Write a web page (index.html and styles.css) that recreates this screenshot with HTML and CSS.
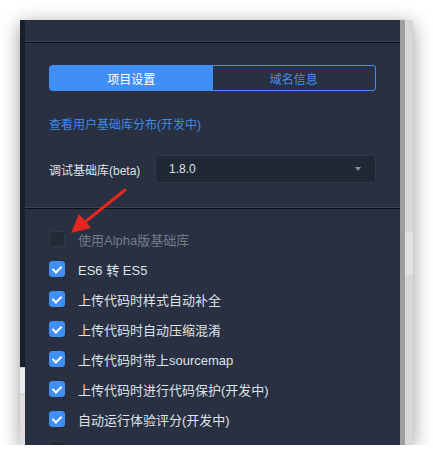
FILE: index.html
```html
<!DOCTYPE html>
<html lang="zh-CN">
<head>
  <meta charset="UTF-8">
  <meta name="viewport" content="width=device-width, initial-scale=1.0">
  <title>项目设置</title>
  <link rel="stylesheet" href="styles.css">
</head>
<body>
  <div class="window">
    <div class="side">
      <div class="side-dark"></div>
      <div class="side-light"></div>
    </div>

    <div class="panel">
      <div class="topbar"></div>

      <div class="settings">
        <div class="tabs">
          <div class="tab active">项目设置</div>
          <div class="tab">域名信息</div>
        </div>

        <a class="link" href="#">查看用户基础库分布(开发中)</a>

        <div class="field">
          <label class="field-label">调试基础库(beta)</label>
          <div class="select">
            <span>1.8.0</span>
            <span class="caret"></span>
          </div>
        </div>
      </div>

      <ul class="options">
        <li class="option disabled"><span class="box"></span>使用Alpha版基础库</li>
        <li class="option"><span class="box checked"></span>ES6 转 ES5</li>
        <li class="option"><span class="box checked"></span>上传代码时样式自动补全</li>
        <li class="option"><span class="box checked"></span>上传代码时自动压缩混淆</li>
        <li class="option"><span class="box checked"></span>上传代码时带上sourcemap</li>
        <li class="option"><span class="box checked"></span>上传代码时进行代码保护(开发中)</li>
        <li class="option"><span class="box checked"></span>自动运行体验评分(开发中)</li>
        <li class="option"><span class="box"></span></li>
      </ul>

      <!-- annotation arrow pointing at the alpha checkbox -->
      <svg class="arrow" width="70" height="60" viewBox="0 0 70 60">
        <line x1="66" y1="4" x2="26" y2="36" stroke="#e5281f" stroke-width="3" stroke-linecap="round"/>
        <polygon points="12,47 20,28 32,42" fill="#e5281f"/>
      </svg>
    </div>

    <div class="scroll">
      <div class="scroll-edge"></div>
      <div class="scroll-track"><span class="thumb"></span></div>
    </div>
  </div>
</body>
</html>
```

FILE: styles.css
```css
:root {
  --panel: #283041;
  --blue: #3f8ff7;
  --link: #3d8be6;
  --text: #dfe2e8;
  --muted: #747a86;
}
* { box-sizing: border-box; margin: 0; padding: 0; }
body {
  background: #ffffff;
  font-family: "Liberation Sans", "Noto Sans CJK SC", sans-serif;
  padding: 20px 20px 0 20px;
}
.window {
  display: flex;
  width: 393px;
  height: 425px;
  overflow: hidden;
  box-shadow: 0 4px 18px rgba(0,0,0,0.4);
}
.side {
  width: 5px;
  display: flex;
  flex-direction: column;
}
.side-dark { height: 347px; background: #1a1f2b; }
.side-light {
  flex: 1;
  background: #e3dddd;
  border-top: 1px solid #c9c9c9;
  box-shadow: inset 0 26px 0 #ececec, inset 0 27px 0 #c4c4c4;
}
.panel {
  position: relative;
  width: 375px;
  background: var(--panel);
}
.topbar {
  height: 22px;
  border-bottom: 1px solid #3b4453;
  box-shadow: 0 1px 0 #0b0e13;
}
.settings {
  height: 166px;
  padding: 23px 24px 0;
  border-bottom: 1px solid #3b4453;
  box-shadow: 0 1px 0 #0b0e13;
}
.tabs {
  display: flex;
  height: 26px;
  border: 1px solid var(--blue);
  border-radius: 3px;
  overflow: hidden;
}
.tab {
  flex: 1;
  display: flex;
  align-items: center;
  justify-content: center;
  font-size: 12px;
  color: var(--blue);
}
.tab.active {
  background: var(--blue);
  color: #ffffff;
}
.link {
  display: block;
  margin-top: 26px;
  font-size: 12px;
  line-height: 16px;
  color: var(--link);
  text-decoration: none;
}
.field {
  display: flex;
  align-items: center;
  margin-top: 22px;
}
.field-label {
  width: 106px;
  font-size: 12px;
  color: var(--text);
}
.select {
  flex: 1;
  height: 28px;
  display: flex;
  align-items: center;
  justify-content: space-between;
  padding: 0 14px 0 13px;
  background: #202735;
  border: 1px solid #303847;
  border-radius: 4px;
  font-size: 12px;
  color: var(--text);
}
.caret {
  width: 0;
  height: 0;
  border-left: 3.5px solid transparent;
  border-right: 3.5px solid transparent;
  border-top: 4px solid #8b909a;
}
.options {
  list-style: none;
  padding: 16px 24px 0;
}
.option {
  display: flex;
  align-items: center;
  gap: 13px;
  height: 30px;
  font-size: 13px;
  color: var(--text);
}
.option.disabled { color: var(--muted); }
.box {
  position: relative;
  width: 16px;
  height: 16px;
  flex: none;
  border-radius: 3px;
  background: #222a38;
  border: 1px solid #323a49;
}
.box.checked {
  background: var(--blue);
  border-color: var(--blue);
}
.box.checked::after {
  content: "";
  position: absolute;
  left: 4px;
  top: 2px;
  width: 4px;
  height: 7px;
  border-right: 2px solid #ffffff;
  border-bottom: 2px solid #ffffff;
  transform: rotate(45deg);
}
.arrow {
  position: absolute;
  left: 34px;
  top: 166px;
}
.scroll {
  display: flex;
  flex: 1;
}
.scroll-edge { width: 5px; background: #9e9e9e; }
.scroll-track {
  position: relative;
  flex: 1;
  background: #d7d7d7;
}
.thumb {
  position: absolute;
  left: 0;
  right: 0;
  top: 212px;
  height: 43px;
  background: #e2e2e2;
}
```
